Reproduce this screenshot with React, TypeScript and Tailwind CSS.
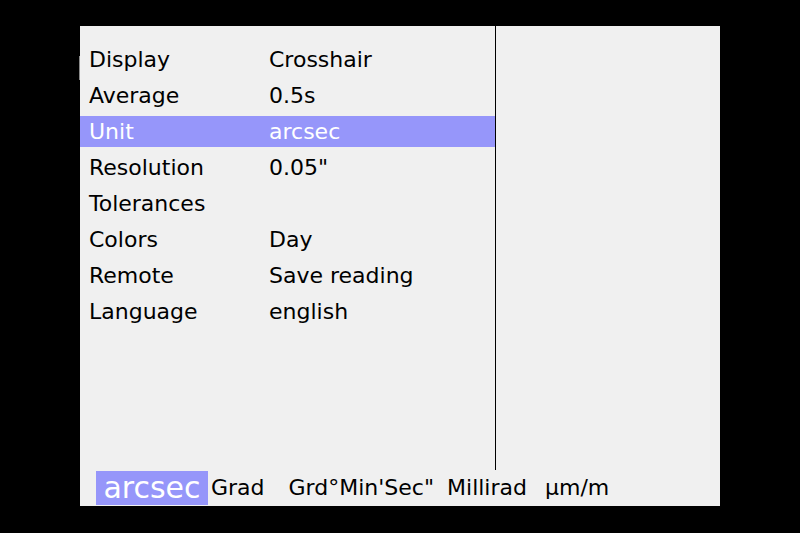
import React from "react";

const rows = [
  { label: "Display", value: "Crosshair" },
  { label: "Average", value: "0.5s" },
  { label: "Unit", value: "arcsec", active: true },
  { label: "Resolution", value: "0.05\"" },
  { label: "Tolerances", value: "" },
  { label: "Colors", value: "Day" },
  { label: "Remote", value: "Save reading" },
  { label: "Language", value: "english" },
];

export default function App() {
  return (
    <div
      className="w-[800px] h-[533px] bg-black flex pl-[79px] pt-[26px]"
      style={{ fontFamily: '"DejaVu Sans", sans-serif' }}
    >
      <div className="w-px h-[24px] mt-[30px] bg-[#8a8a8a]" />
      <div className="w-[640px] h-[480px] bg-[#f0f0f0] flex flex-col">
        <div className="flex h-[444px]">
          <div className="w-[416px] border-r border-black pt-[18px] flex flex-col gap-[5px]">
            {rows.map((r) => (
              <div
                key={r.label}
                className={
                  "flex items-center h-[31px] pl-[9px] text-[22px] leading-none " +
                  (r.active ? "bg-[#9696fa] text-white" : "text-black")
                }
              >
                <span className="w-[180px]">{r.label}</span>
                <span>{r.value}</span>
              </div>
            ))}
          </div>
          <div className="flex-1" />
        </div>
        <div className="flex items-center h-[36px] pl-[16px] text-[22px] text-black leading-none">
          <span className="h-[34px] w-[112px] bg-[#9696fa] text-white text-[30px] flex items-center justify-center">
            arcsec
          </span>
          <span className="ml-[3px]">Grad</span>
          <span className="ml-[24px]">Grd°Min'Sec"</span>
          <span className="ml-[13px]">Millirad</span>
          <span className="ml-[18px]">µm/m</span>
        </div>
      </div>
    </div>
  );
}
